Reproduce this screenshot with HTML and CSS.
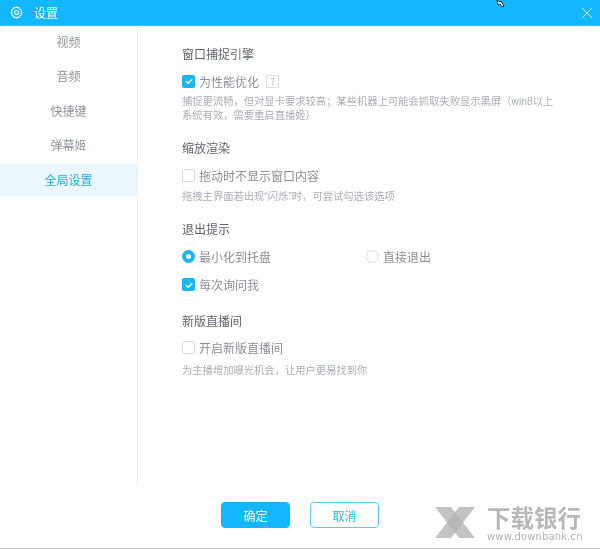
FILE: index.html
```html
<!DOCTYPE html>
<html lang="zh-CN">
<head>
<meta charset="utf-8">
<title>设置</title>
<link rel="stylesheet" href="styles.css">
</head>
<body>
<div class="window">
  <header class="titlebar">
    <svg class="gear" viewBox="0 0 14 14" width="13" height="13" fill="none" stroke="#fff" stroke-width="1.2" stroke-linejoin="round"><path d="M4.2 1.8h1.6L7 1l1.2.8h1.6l.8 1.5 1.4.9v1.7L13 7l-1 1.1v1.7l-1.4.9-.8 1.5H8.2L7 13l-1.2-.8H4.2l-.8-1.5L2 9.8V8.1L1 7l1-1.1V4.2l1.4-.9z"/><circle cx="7" cy="7" r="2.2"/></svg>
    <span class="title">设置</span>
    <svg class="close" viewBox="0 0 12 12" width="12" height="12" stroke="#fff" stroke-width="1"><path d="M1 1l10 10M11 1L1 11"/></svg>
    <svg class="cursor" viewBox="0 0 10 8" width="10" height="8"><path d="M1 0l3 2 1-1 3 5-2 1-2-3-2 1z" fill="#fff" stroke="#223" stroke-width="1"/></svg>
  </header>
  <div class="body">
    <nav class="sidebar">
      <a class="nav-item">视频</a>
      <a class="nav-item">音频</a>
      <a class="nav-item">快捷键</a>
      <a class="nav-item">弹幕姬</a>
      <a class="nav-item active">全局设置</a>
    </nav>
    <main class="content">
      <section class="group">
        <h2 class="heading">窗口捕捉引擎</h2>
        <div class="row">
          <label class="option"><span class="box checked"><svg viewBox="0 0 12 12" width="12" height="12"><path d="M3 6.2l2.2 2.1L9.2 4.2" fill="none" stroke="#fff" stroke-width="1.5"/></svg></span>为性能优化</label>
          <span class="help">?</span>
        </div>
        <p class="desc">捕捉更流畅，但对显卡要求较高；某些机器上可能会抓取失败显示黑屏（win8以上<br>系统有效，需要重启直播姬）</p>
      </section>
      <section class="group group-scale">
        <h2 class="heading">缩放渲染</h2>
        <div class="row">
          <label class="option"><span class="box"></span>拖动时不显示窗口内容</label>
        </div>
        <p class="desc">拖拽主界面若出现“闪烁”时，可尝试勾选该选项</p>
      </section>
      <section class="group group-exit">
        <h2 class="heading">退出提示</h2>
        <div class="row first-choice">
          <label class="option radio-col"><span class="radio on"></span>最小化到托盘</label>
          <label class="option"><span class="radio"></span>直接退出</label>
        </div>
        <div class="row second">
          <label class="option"><span class="box checked"><svg viewBox="0 0 12 12" width="12" height="12"><path d="M3 6.2l2.2 2.1L9.2 4.2" fill="none" stroke="#fff" stroke-width="1.5"/></svg></span>每次询问我</label>
        </div>
      </section>
      <section class="group group-last">
        <h2 class="heading">新版直播间</h2>
        <div class="row">
          <label class="option"><span class="box"></span>开启新版直播间</label>
        </div>
        <p class="desc">为主播增加曝光机会，让用户更易找到你</p>
      </section>
    </main>
  </div>
  <footer class="footer">
    <button class="btn primary">确定</button>
    <button class="btn ghost">取消</button>
    <div class="watermark">
      <svg class="wm-logo" viewBox="0 0 40 31" width="40" height="31"><g fill="#b4b4b4" fill-opacity=".8"><path d="M0 0h16l24 31H24z"/><path d="M40 0H24L0 31h16z"/></g></svg>
      <div class="wm-text"><div class="wm-cn">下载银行</div><div class="wm-url">www.downbank.cn</div></div>
    </div>
  </footer>
</div>
</body>
</html>
```
FILE: styles.css
```css
* { box-sizing: border-box; }
html, body { margin: 0; padding: 0; }
body {
  width: 600px; height: 549px; overflow: hidden; background: #fff;
  font-family: "Noto Sans CJK SC", "Noto Sans", sans-serif;
}
.window { height: 549px; display: flex; flex-direction: column; border-bottom: 1px solid #c8c8c8; filter: blur(0.35px); }
.titlebar {
  height: 25px; flex: none; background: #12b7ff; box-shadow: 0 1px 0 #3cc5ff;
  display: flex; align-items: center; padding: 0 7px 0 10px; color: #fff; position: relative;
}
.gear { flex: none; }
.title { font-size: 12px; margin-left: 11px; flex: 1; }
.close { flex: none; opacity: .85; }
.cursor { position: absolute; left: 496px; top: 0; }
.body { display: flex; height: 460px; flex: none; }
.sidebar { width: 138px; flex: none; border-right: 1px solid #ececec; }
.nav-item {
  display: block; height: 34.4px; line-height: 34px; text-align: center;
  font-size: 12px; color: #8f949b;
}
.nav-item.active { background: #ebf8ff; color: #23ade5; }
.content { flex: 1; padding: 20px 0 0 44px; }
.group { margin-bottom: 17px; }
.group-scale { margin-bottom: 16px; }
.group-exit { margin-bottom: 18px; }
.heading { margin: 0; font-size: 12px; line-height: 18px; font-weight: 400; color: #5f646b; }
.row { display: flex; align-items: center; height: 18px; margin-top: 9px; }
.row.first-choice { margin-top: 10px; }
.row.second { margin-top: 10px; }
.option { display: flex; align-items: center; font-size: 12px; color: #8a8f96; }
.radio-col { width: 184px; }
.box {
  width: 13px; height: 13px; border: 1px solid #d8dadd; border-radius: 2px; margin-right: 4px;
  display: flex; align-items: center; justify-content: center; background: #fff; flex: none;
}
.box.checked { background: #19b5f5; border-color: #19b5f5; }
.box svg { flex: none; }
.radio {
  width: 13px; height: 13px; border: 1px solid #d8dadd; border-radius: 50%; margin-right: 4px; flex: none; background: #fff;
}
.radio.on { border: 4px solid #19b5f5; }
.help {
  width: 13px; height: 13px; border: 1px solid #dcdee0; margin-left: 7px; font-size: 9px; line-height: 11px;
  text-align: center; color: #a8acb2;
}
.desc {
  margin: 5px 0 0; font-size: 10.3px; line-height: 13.5px; color: #a9aeb5; width: 410px;
  font-family: "Liberation Sans", "Noto Sans CJK SC", sans-serif;
}
.group-scale .desc { margin-top: 6px; }
.group-last .desc { margin-top: 7px; }
.footer { flex: 1; position: relative; display: flex; gap: 20px; padding: 17px 0 0 221px; }
.btn { width: 69px; height: 26px; border-radius: 4px; font: inherit; font-size: 12px; padding: 0; }
.btn.primary { background: #12b7ff; border: 1px solid #12b7ff; color: #fff; }
.btn.ghost { background: #fff; border: 1px solid #5cc8f5; color: #2fb2ea; }
.watermark { position: absolute; left: 435px; top: 21px; display: flex; align-items: flex-start; gap: 12px; }
.wm-logo { flex: none; margin-top: 1px; }
.wm-cn { font-size: 23.5px; line-height: 23px; font-weight: 700; color: #b8b8b8; white-space: nowrap; }
.wm-url { margin-top: 3px; font-size: 10px; line-height: 10px; color: #b2b2b2; font-family: "DejaVu Sans", sans-serif; white-space: nowrap; letter-spacing: .15px; }
```
